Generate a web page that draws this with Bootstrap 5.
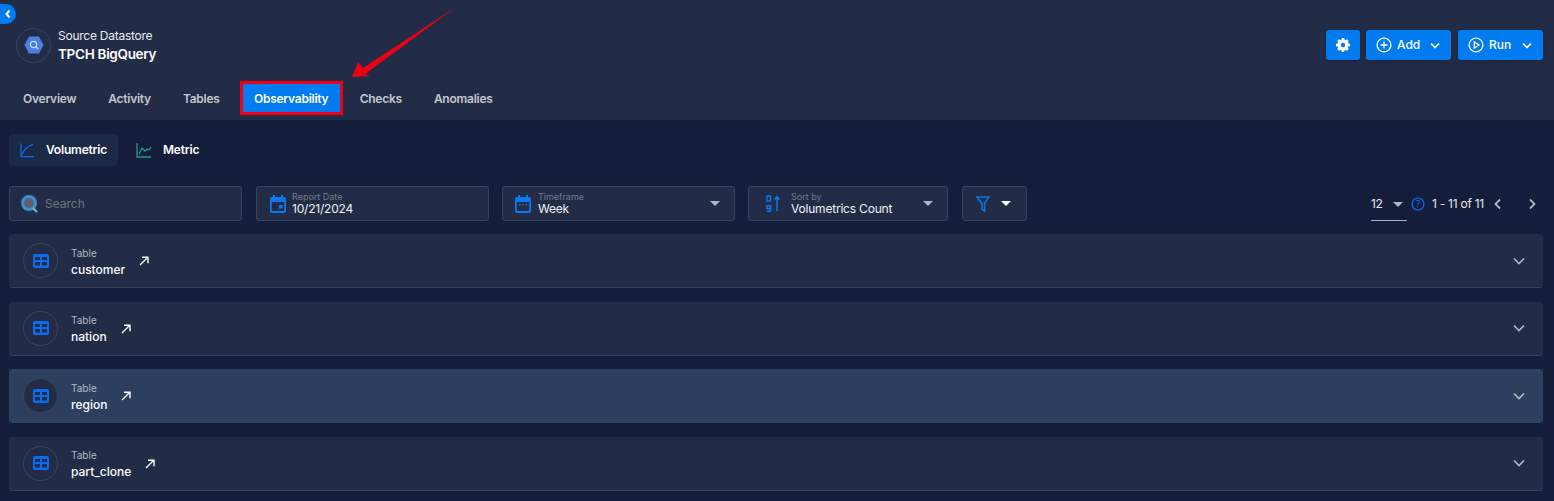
<!DOCTYPE html>
<html lang="en">
<head>
    <meta charset="UTF-8">
    <meta name="viewport" content="width=device-width, initial-scale=1.0">
    <title>TPCH BigQuery - Observability</title>
    <link href="https://cdn.jsdelivr.net/npm/bootstrap@5.3.0/dist/css/bootstrap.min.css" rel="stylesheet">
    <style>
        html, body { height: 501px; overflow: hidden; }
        body { background: #141e3a; color: #fff; font-family: Inter, "Noto Sans", sans-serif; font-size: 12px; position: relative; }
        .top-head { background: #232c47; height: 120px; padding: 27px 11px 0 16px; }
        .ds-circle { width: 35px; height: 35px; border: 1px solid #3a4360; border-radius: 50%; }
        .ds-label { font-size: 12px; line-height: 15px; letter-spacing: -.25px; color: #e8eaf0; margin-top: 1px; }
        .ds-name { font-size: 13.5px; font-weight: 600; line-height: 18px; margin-top: 2px; letter-spacing: -.3px; }
        .ds-text { margin-left: 7px; }
        .act-group { gap: 6px; margin-top: 3px; }
        .act-btn { background: #007bf0; border: 0; border-radius: 3px; height: 30px; color: #fff; font-size: 12px; font-weight: 500; padding: 0 10px; box-shadow: 0 1px 3px rgba(0,0,0,.3); }
        .act-btn:hover { background: #007bf0; color: #fff; }
        .act-gear { width: 34px; }
        .act-wide { width: 85px; }
        .act-add { margin-right: 1px; }
        .act-txt { margin-left: 5px; margin-right: 11px; width: 22px; text-align: left; }
        .head-tabs { margin-top: 20px; margin-left: -16px; padding-left: 7px; }
        .head-tab { color: #c3c6cf; font-size: 12px; font-weight: 600; height: 30px; padding: 0 16px; line-height: 32px; letter-spacing: -.25px; text-decoration: none; }
        .head-tab-on { background: #007bf0; background-clip: padding-box; color: #fff; padding: 0; border: 3px solid #f00012; width: 103px; height: 34px; line-height: 30px; margin: -2px 1px 0 4px; text-align: center; }
        .sub-tabs { padding: 14px 9px 0; gap: 7px; }
        .sub-tab { height: 32px; border-radius: 3px; padding: 0 11px; font-weight: 600; font-size: 12px; letter-spacing: -.2px; gap: 12px; }
        .sub-tab-on { background: #1b2846; width: 109px; }
        .filter-row { padding: 20px 11px 0 9px; }
        .filter-box { height: 35px; background: #232c47; border: 1px solid #384260; border-radius: 3px; }
        .fb-search { width: 233px; padding-left: 10px; margin-right: 14px; color: #6d7384; }
        .fb-date { width: 233px; padding-left: 13px; margin-right: 13px; }
        .fb-time { width: 233px; padding-left: 12px; padding-right: 14px; margin-right: 13px; }
        .fb-sort { width: 200px; padding-left: 17px; padding-right: 14px; margin-right: 14px; }
        .fb-filter { width: 65px; padding-left: 13px; gap: 3px; }
        .fb-icon { margin-right: 6px; }
        .fb-icon-time { margin-right: 7px; }
        .fb-icon-sort { margin-right: 11px; }
        .fb-cap { font-size: 9px; line-height: 10px; color: #727889; }
        .fb-val { font-size: 12px; line-height: 13px; color: #f1f2f5; letter-spacing: -.2px; }
        .caret-g { width: 0; height: 0; border-left: 5px solid transparent; border-right: 5px solid transparent; border-top: 5px solid #b4b7c0; }
        .caret-w { border-top-color: #fff; }
        .caret-pp { margin-right: 4px; }
        .pager { font-size: 12px; color: #e6e8ee; letter-spacing: -.25px; margin-right: 6px; }
        .per-page { width: 36px; height: 33px; border-bottom: 1px solid #a9adb8; margin-right: 4px; margin-top: 2px; }
        .help-ic { margin-right: 7px; }
        .pg-prev { margin-left: 9px; }
        .pg-next { margin-left: 26px; }
        .rows-wrap { padding: 13px 11px 0 9px; gap: 13.5px; }
        .table-row { height: 54px; background: #232c47; border-bottom: 1px solid #384260; border-radius: 3px; padding: 0 18px 0 14px; }
        .table-row-hot { background: #2d3f5f; }
        .tbl-circle { width: 35px; height: 35px; border: 1px solid #3a4360; border-radius: 50%; }
        .table-row-hot .tbl-circle { background: #232c47; }
        .tbl-text { margin-left: 13px; padding-top: 2px; }
        .tbl-cap { font-size: 10px; line-height: 12px; color: #b4b7c0; }
        .tbl-name { font-size: 12px; font-weight: 500; line-height: 14px; margin-top: 4px; }
        .tbl-link { margin-left: 14px; margin-top: 1px; }
        .back-chip { position: absolute; left: 0; top: 4px; width: 16px; height: 20px; background: #007bf0; border-radius: 0 10px 10px 0; }
        .red-arrow { position: absolute; left: 345px; top: 2px; }
    </style>
</head>
<body>
    <div class="back-chip d-flex align-items-center justify-content-center">
        <svg width="8" height="10" viewBox="0 0 8 10"><path d="M5.500 1.500 2.500 5l3 3.500" fill="none" stroke="#fff" stroke-width="2"/></svg>
    </div>

    <div class="top-head">
        <div class="d-flex justify-content-between align-items-start">
            <div class="d-flex align-items-center">
                <div class="ds-circle d-flex align-items-center justify-content-center">
                    <svg width="20" height="18" viewBox="0 0 20 18">
                        <path d="M5 0.500h10L19.500 9 15 17.500H5L.5 9z" fill="#4a7fe8"/>
                        <circle cx="9.500" cy="8.500" r="3.200" fill="none" stroke="#cfdcfa" stroke-width="1.200"/>
                        <path d="M11.500 10.500l2.500 2.500" stroke="#cfdcfa" stroke-width="1.400"/>
                    </svg>
                </div>
                <div class="ds-text">
                    <div class="ds-label">Source Datastore</div>
                    <div class="ds-name">TPCH BigQuery</div>
                </div>
            </div>
            <div class="d-flex act-group">
                <button class="btn act-btn act-gear d-flex align-items-center justify-content-center">
                    <svg width="16" height="16" viewBox="0 0 16 16"><path fill="#fff" fill-rule="evenodd" d="M6.600 0h2.800l.4 1.900 1.200.5 1.600-1 2 2-1 1.600.5 1.200 1.900.4v2.800l-1.900.4-.5 1.200 1 1.600-2 2-1.600-1-1.200.5-.4 1.900H6.600l-.4-1.900-1.200-.5-1.600 1-2-2 1-1.600-.5-1.200L0 9.400V6.600l1.900-.4.500-1.200-1-1.600 2-2 1.600 1 1.200-.5zM8 5.500a2.500 2.500 0 1 0 0 5 2.500 2.500 0 0 0 0-5z"/></svg>
                </button>
                <button class="btn act-btn act-wide act-add d-flex align-items-center">
                    <svg width="16" height="16" viewBox="0 0 16 16"><circle cx="8" cy="8" r="6.900" fill="none" stroke="#fff" stroke-width="1.300"/><path d="M8 4.500v7M4.500 8h7" stroke="#fff" stroke-width="1.300"/></svg>
                    <span class="act-txt">Add</span>
                    <svg width="10" height="7" viewBox="0 0 10 7"><path d="M1 1.500l4 4 4-4" fill="none" stroke="#fff" stroke-width="1.700"/></svg>
                </button>
                <button class="btn act-btn act-wide d-flex align-items-center">
                    <svg width="16" height="16" viewBox="0 0 16 16"><circle cx="8" cy="8" r="6.900" fill="none" stroke="#fff" stroke-width="1.300"/><path d="M6.300 5v6l4.700-3z" fill="none" stroke="#fff" stroke-width="1.300"/></svg>
                    <span class="act-txt">Run</span>
                    <svg width="10" height="7" viewBox="0 0 10 7"><path d="M1 1.500l4 4 4-4" fill="none" stroke="#fff" stroke-width="1.700"/></svg>
                </button>
            </div>
        </div>
        <nav class="d-flex head-tabs">
            <a class="head-tab" href="#">Overview</a>
            <a class="head-tab" href="#">Activity</a>
            <a class="head-tab" href="#">Tables</a>
            <a class="head-tab head-tab-on" href="#">Observability</a>
            <a class="head-tab" href="#">Checks</a>
            <a class="head-tab" href="#">Anomalies</a>
        </nav>
    </div>

    <div class="d-flex sub-tabs">
        <div class="sub-tab sub-tab-on d-flex align-items-center">
            <svg width="15" height="15" viewBox="0 0 15 15"><path d="M1 0v14h14" fill="none" stroke="#0a6cf0" stroke-width="1.400"/><path d="M2 12C4 7 8 3 14 1" fill="none" stroke="#0a6cf0" stroke-width="1.400"/></svg>
            <span>Volumetric</span>
        </div>
        <div class="sub-tab d-flex align-items-center">
            <svg width="15" height="15" viewBox="0 0 15 15"><path d="M1 0v14h14" fill="none" stroke="#1f9c8a" stroke-width="1.300"/><path d="M3 11l3-6 3 3 2-2 2 1 2-3" fill="none" stroke="#1f9c8a" stroke-width="1.300"/></svg>
            <span>Metric</span>
        </div>
    </div>

    <div class="d-flex align-items-center filter-row">
        <div class="filter-box fb-search d-flex align-items-center">
            <svg width="19" height="20" viewBox="0 0 19 20" class="fb-icon"><circle cx="9" cy="9" r="6.500" fill="#5b6372" stroke="#3f8fcf" stroke-width="3"/><path d="M13 14l4 4" stroke="#7fb6dd" stroke-width="2"/></svg>
            <span>Search</span>
        </div>
        <div class="filter-box fb-date d-flex align-items-center">
            <svg width="16" height="18" viewBox="0 0 16 18" class="fb-icon"><path fill="#0a78f0" fill-rule="evenodd" d="M3 0h2v2h6V0h2v2h1a2 2 0 0 1 2 2v12a2 2 0 0 1-2 2H2a2 2 0 0 1-2-2V4a2 2 0 0 1 2-2h1zM1.800 7v9h12.400V7zM9 10h3.500v3.500H9z"/></svg>
            <div>
                <div class="fb-cap">Report Date</div>
                <div class="fb-val">10/21/2024</div>
            </div>
        </div>
        <div class="filter-box fb-time d-flex align-items-center">
            <svg width="16" height="18" viewBox="0 0 16 18" class="fb-icon-time"><path fill="#0a78f0" fill-rule="evenodd" d="M3 0h2v2h6V0h2v2h1a2 2 0 0 1 2 2v12a2 2 0 0 1-2 2H2a2 2 0 0 1-2-2V4a2 2 0 0 1 2-2h1zM1.800 7v9h12.400V7zM4 9h1.500v1.500H4zM7.200 9h1.500v1.500H7.200zM10.500 9H12v1.500h-1.500z"/></svg>
            <div>
                <div class="fb-cap">Timeframe</div>
                <div class="fb-val">Week</div>
            </div>
            <div class="caret-g ms-auto"></div>
        </div>
        <div class="filter-box fb-sort d-flex align-items-center">
            <svg width="14" height="17" viewBox="0 0 14 17" class="fb-icon-sort"><g fill="none" stroke="#0a78f0" stroke-width="1.500"><rect x="1" y="1" width="3.500" height="5"/><rect x="1" y="10.800" width="3.500" height="2.700"/><path d="M4.500 13v3.500M1 16.200h3.500M11 16V2M8.800 4.500 11 1.500l2.200 3"/></g></svg>
            <div>
                <div class="fb-cap">Sort by</div>
                <div class="fb-val">Volumetrics Count</div>
            </div>
            <div class="caret-g ms-auto"></div>
        </div>
        <div class="filter-box fb-filter d-flex align-items-center">
            <svg width="14" height="16" viewBox="0 0 14 16"><path d="M1 1h12L8.500 7.500V15L6 13V7.500z" fill="none" stroke="#0a78f0" stroke-width="1.500"/></svg>
            <div class="caret-g caret-w ms-2"></div>
        </div>
        <div class="pager d-flex align-items-center ms-auto">
            <div class="per-page d-flex align-items-center justify-content-between">
                <span>12</span><div class="caret-g caret-pp"></div>
            </div>
            <svg width="14" height="14" viewBox="0 0 14 14" class="help-ic"><circle cx="7" cy="7" r="6" fill="none" stroke="#0a6cf0" stroke-width="1.200"/><text x="7" y="10" font-size="9" text-anchor="middle" fill="#0a6cf0" font-family="Inter, sans-serif">?</text></svg>
            <span>1 - 11 of 11</span>
            <svg width="9" height="12" viewBox="0 0 9 12" class="pg-prev"><path d="M7 1.500 2.500 6 7 10.500" fill="none" stroke="#b4b7c0" stroke-width="1.800"/></svg>
            <svg width="9" height="12" viewBox="0 0 9 12" class="pg-next"><path d="M2 1.500 6.500 6 2 10.500" fill="none" stroke="#b4b7c0" stroke-width="1.800"/></svg>
        </div>
    </div>

    <div class="d-flex flex-column rows-wrap" id="rows"></div>

    <svg class="red-arrow" width="115" height="80" viewBox="0 0 115 80">
        <path d="M111 5 20 72 25 74 7 75 13 60 18 66z" fill="#f00012"/>
    </svg>

    <script src="https://cdn.jsdelivr.net/npm/bootstrap@5.3.0/dist/js/bootstrap.bundle.min.js"></script>
    <script>
        const tables = ["customer", "nation", "region", "part_clone"];
        const rows = document.getElementById("rows");
        tables.forEach((name, i) => {
            rows.innerHTML += `
                <div class="table-row d-flex align-items-center ${i === 2 ? "table-row-hot" : ""}">
                    <div class="tbl-circle d-flex align-items-center justify-content-center">
                        <svg width="16" height="14" viewBox="0 0 16 14"><path fill="#0a6cf0" fill-rule="evenodd" d="M2 0h12a2 2 0 0 1 2 2v10a2 2 0 0 1-2 2H2a2 2 0 0 1-2-2V2a2 2 0 0 1 2-2zM2 3v3h5V3zm7 0v3h5V3zM2 8v3.500h5V8zm7 0v3.500h5V8z"/></svg>
                    </div>
                    <div class="tbl-text">
                        <div class="tbl-cap">Table</div>
                        <div class="tbl-name">${name}</div>
                    </div>
                    <svg class="tbl-link" width="10" height="10" viewBox="0 0 10 10"><path d="M1 9 8.500 1.500M3 1.200h6v6" fill="none" stroke="#fff" stroke-width="1.400"/></svg>
                    <svg class="ms-auto" width="12" height="8" viewBox="0 0 12 8"><path d="M1 1.500l5 5 5-5" fill="none" stroke="#b4b7c0" stroke-width="1.700"/></svg>
                </div>`;
        });
    </script>
</body>
</html>
